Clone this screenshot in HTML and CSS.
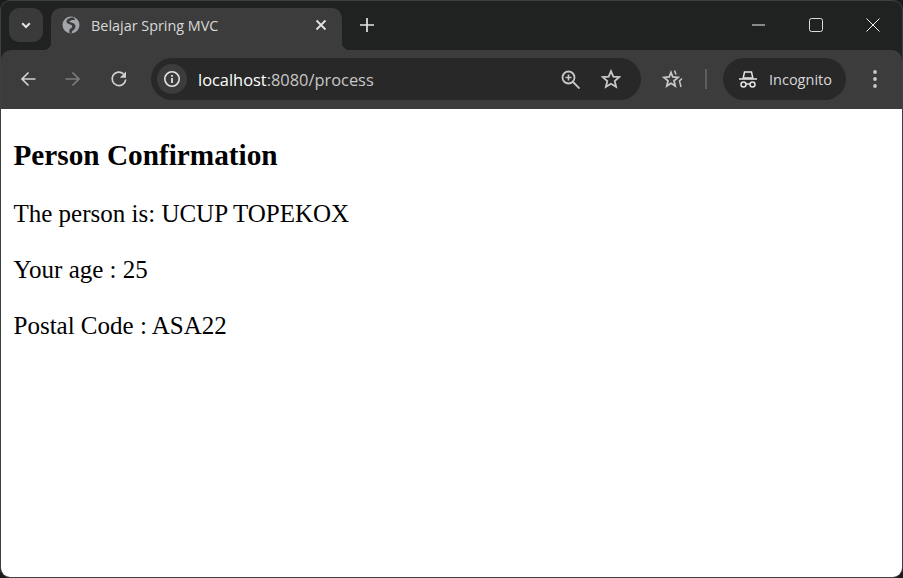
FILE: index.html

```html
<!DOCTYPE html>
<html lang="en">
<head>
    <meta charset="UTF-8">
    <title>Belajar Spring MVC</title>
    <link rel="stylesheet" href="styles.css">
</head>
<body>
    <div class="window">
        <div class="tabstrip">
            <div class="tab-search">
                <svg width="12" height="12" viewBox="0 0 12 12"><path d="M2.2 4.2 6 8l3.8-3.8" fill="none" stroke="#e3e3e3" stroke-width="2"/></svg>
            </div>
            <div class="tab">
                <svg class="favicon" width="18" height="18" viewBox="0 0 18 18">
                    <circle cx="9" cy="9" r="8.500" fill="#a2a6aa"/>
                    <path d="M12 1.500C8 1 4.500 3 4.500 5.500 4.500 8 8 8 9.500 9c1.500 1 .5 3-1 3.500-1 .5-1.500 2-1 4.500l2.500.5c-.5-2 0-2.500 1.500-3.500 2-1.300 3-4.500 .5-6.300C10.500 6.500 7.500 6.500 7.500 5.500 7.500 4.500 10 3.800 13 4Z" fill="#3c3c3c"/>
                </svg>
                <span class="tab-title">Belajar Spring MVC</span>
                <svg class="tab-close" width="12" height="12" viewBox="0 0 12 12"><path d="M1.500 1.500l9 9m0-9-9 9" stroke="#e3e3e3" stroke-width="1.800"/></svg>
            </div>
            <svg class="new-tab" width="14" height="14" viewBox="0 0 14 14"><path d="M7 0v14M0 7h14" stroke="#e3e3e3" stroke-width="1.700"/></svg>
            <div class="caption">
                <svg width="14" height="14" viewBox="0 0 14 14"><path d="M0 7h13" stroke="#eee" stroke-width="1"/></svg>
                <svg width="14" height="14" viewBox="0 0 14 14"><rect x=".5" y=".5" width="13" height="13" rx="2" fill="none" stroke="#ddd" stroke-width="1"/></svg>
                <svg width="14" height="14" viewBox="0 0 14 14"><path d="M.5.5l13 13m0-13-13 13" stroke="#eee" stroke-width="1"/></svg>
            </div>
        </div>

        <div class="toolbar">
            <svg class="nav-btn" width="16" height="16" viewBox="0 0 16 16"><path d="M15.500 8H2M8.500 1.500 2 8l6.500 6.500" fill="none" stroke="#d0d0d0" stroke-width="1.700"/></svg>
            <svg class="nav-btn" width="16" height="16" viewBox="0 0 16 16"><path d="M.5 8H14M7.500 1.500 14 8l-6.500 6.500" fill="none" stroke="#7c7c7c" stroke-width="1.700"/></svg>
            <svg class="nav-btn" width="18" height="18" viewBox="0 0 18 18"><path d="M15.700 9.500A6.800 6.800 0 1 1 13.500 3.800" fill="none" stroke="#d0d0d0" stroke-width="1.700"/><path d="M16 1.500v6.200h-6.200Z" fill="#d0d0d0"/></svg>

            <div class="omnibox">
                <div class="site-info">
                    <svg width="18" height="18" viewBox="0 0 18 18"><circle cx="9" cy="9" r="7.200" fill="none" stroke="#e3e3e3" stroke-width="1.600"/><path d="M9 8v5M9 5v1.800" stroke="#e3e3e3" stroke-width="1.800"/></svg>
                </div>
                <div class="url"><span class="host">localhost</span>:8080/process</div>
                <svg class="omni-icon" width="19" height="19" viewBox="0 0 19 19"><circle cx="7.500" cy="7.500" r="6" fill="none" stroke="#c7c7c7" stroke-width="1.800"/><path d="M12 12l6.500 6.500" stroke="#c7c7c7" stroke-width="1.800"/><path d="M7.500 4.500v6M4.500 7.500h6" stroke="#c7c7c7" stroke-width="1.600"/></svg>
                <svg class="omni-icon" width="20" height="20" viewBox="0 0 20 20"><path d="M10 2.200 12.300 7.600 18.200 8.100 13.700 12 15.100 17.800 10 14.700 4.900 17.800 6.300 12 1.800 8.100 7.700 7.600Z" fill="none" stroke="#c7c7c7" stroke-width="1.800"/></svg>
            </div>

            <svg class="reading" width="22" height="20" viewBox="0 0 22 20"><path d="M9 3.500 10.800 8 16 8.400 12 11.800 13.200 17 9 14.300 4.800 17 6 11.800 2 8.400 7.200 8Z" fill="none" stroke="#c7c7c7" stroke-width="1.800"/><path d="M12.500 1.500l1.500 4M20 9.500l-2.500 2.500 1.500 6" fill="none" stroke="#c7c7c7" stroke-width="1.500"/></svg>
            <div class="divider"></div>
            <div class="incognito">
                <svg width="18" height="17" viewBox="0 0 18 17">
                    <path d="M5.500 1h7l1.300 6H4.200Z" fill="none" stroke="#e3e3e3" stroke-width="1.500"/>
                    <path d="M0 8h18" stroke="#e3e3e3" stroke-width="1.600"/>
                    <circle cx="4.500" cy="13.500" r="2.500" fill="none" stroke="#e3e3e3" stroke-width="1.500"/>
                    <circle cx="13.500" cy="13.500" r="2.500" fill="none" stroke="#e3e3e3" stroke-width="1.500"/>
                    <path d="M7 13h4" stroke="#e3e3e3" stroke-width="1.300"/>
                </svg>
                <span>Incognito</span>
            </div>
            <svg class="menu" width="4" height="18" viewBox="0 0 4 18"><circle cx="2" cy="2" r="1.900" fill="#c7c7c7"/><circle cx="2" cy="9" r="1.900" fill="#c7c7c7"/><circle cx="2" cy="16" r="1.900" fill="#c7c7c7"/></svg>
        </div>

        <div class="page">
            <h3>Person Confirmation</h3>
            <p>The person is: UCUP TOPEKOX</p>
            <p>Your age : 25</p>
            <p>Postal Code : ASA22</p>
        </div>
    </div>
</body>
</html>
```

FILE: styles.css

```css
html, body {
    height: 100%;
}
body {
    margin: 0;
    background: #1b1b1b;
    overflow: hidden;
}
.window {
    height: 100%;
    box-sizing: border-box;
    display: flex;
    flex-direction: column;
    background: #202222;
    border: 1px solid #3f3f3f;
    border-radius: 10px;
    overflow: hidden;
    font-family: "Open Sans", "Noto Sans", sans-serif;
}

/* tabs */
.tabstrip {
    height: 49px;
    flex: none;
    display: flex;
    align-items: flex-start;
}
.tab-search {
    width: 34px;
    height: 34px;
    margin: 7px 0 0 8px;
    background: #3a3a3a;
    border-radius: 10px;
    display: flex;
    align-items: center;
    justify-content: center;
}
.tab {
    width: 291px;
    height: 42px;
    margin: 7px 0 0 8px;
    box-sizing: border-box;
    padding: 0 14px 8px 11px;
    background: #3c3c3c;
    border-radius: 10px 10px 0 0;
    display: flex;
    align-items: center;
    position: relative;
}
.tab::before, .tab::after {
    content: "";
    position: absolute;
    bottom: 0;
    width: 8px;
    height: 8px;
}
.tab::before {
    left: -8px;
    background: radial-gradient(circle at 0 0, transparent 8px, #3c3c3c 8.5px);
}
.tab::after {
    right: -8px;
    background: radial-gradient(circle at 100% 0, transparent 8px, #3c3c3c 8.5px);
}
.tab-title {
    flex: 1;
    margin-left: 11px;
    font-size: 14.4px;
    color: #d8d8d8;
}
.tab-close {
    margin-right: 1px;
}
.new-tab {
    margin: 17px 0 0 18px;
}
.caption {
    margin: 17px 22px 0 auto;
    display: flex;
    gap: 43px;
}

/* toolbar */
.toolbar {
    height: 59px;
    flex: none;
    box-sizing: border-box;
    display: flex;
    align-items: center;
    padding: 0 19px 1px 19px;
    background: #3c3c3c;
    border-radius: 10px 10px 0 0;
}
.nav-btn {
    margin-right: 29px;
    flex: none;
}
.nav-btn:nth-child(3) {
    margin: 0 23px 0 0;
}
.omnibox {
    width: 490px;
    height: 42px;
    flex: none;
    box-sizing: border-box;
    padding: 0 20px 0 6px;
    background: #282828;
    border-radius: 21px;
    display: flex;
    align-items: center;
}
.site-info {
    width: 30px;
    height: 30px;
    background: #3c3c3c;
    border-radius: 50%;
    display: flex;
    align-items: center;
    justify-content: center;
}
.url {
    flex: 1;
    margin-left: 11px;
    font-size: 16.4px;
    color: #c7c7c7;
}
.host {
    color: #ffffff;
}
.omni-icon {
    margin-left: 21px;
}
.reading {
    margin-left: 21px;
}
.divider {
    width: 2px;
    height: 20px;
    margin-left: 21px;
    background: #5f5f5f;
}
.incognito {
    width: 123px;
    height: 42px;
    margin-left: 16px;
    box-sizing: border-box;
    padding-left: 16px;
    background: #282828;
    border-radius: 21px;
    display: flex;
    align-items: center;
    gap: 12px;
    font-size: 14.5px;
    color: #d8d8d8;
}
.menu {
    margin-left: 27px;
}

/* page */
.page {
    flex: 1;
    background: #ffffff;
    padding: 1px 12.5px;
    font-family: "Liberation Serif", serif;
    font-size: 25px;
    color: #000000;
}
.page h3 {
    margin: 29px 0 28px;
    font-size: 1.17em;
}
.page p {
    margin: 28px 0;
}
```
